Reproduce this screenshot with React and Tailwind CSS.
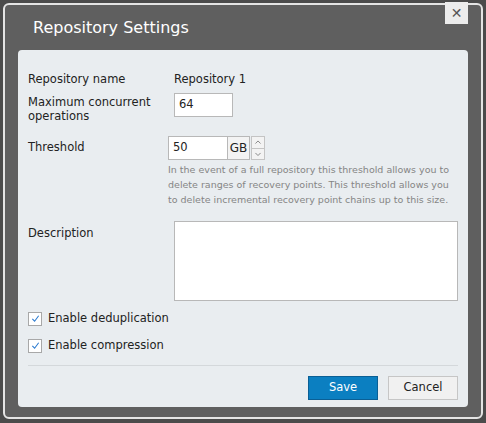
export default function App() {
  const Check = () => (
    <span className="w-[14px] h-[14px] border border-[#a8a8a8] bg-white flex items-center justify-center">
      <svg width="9" height="9" viewBox="0 0 10 10"><path d="M1.5 5.5 L4 8 L8.5 2" fill="none" stroke="#2b7bd0" strokeWidth="1.2" /></svg>
    </span>
  );
  return (
    <div className="w-[486px] h-[423px] bg-[#4b4b4b] pt-[3px] px-[3px] pb-[4px]" style={{ fontFamily: '"DejaVu Sans", Tahoma, sans-serif' }}>
      <div className="relative h-full rounded-[6px] border-[2px] border-[#e4e4e4] bg-[#5f5f5f] px-[13px] pb-[10px] flex flex-col">
        <button className="absolute top-[-3px] right-[13px] w-[23px] h-[22px] bg-[#ececec] text-[#555] text-[14px] leading-none flex items-center justify-center">✕</button>
        <div className="h-[45px] flex items-center pl-[15px] text-white text-[16px]">Repository Settings</div>
        <div className="flex-1 bg-[#e9edf0] rounded-[4px] pt-[20px] px-[10px] text-[11.5px] text-[#222]">
          <div className="flex h-[20px] items-center">
            <div className="w-[146px]">Repository name</div>
            <div>Repository 1</div>
          </div>
          <div className="flex mt-[3px]">
            <div className="w-[146px] leading-[14px] pt-[2px]">Maximum concurrent<br />operations</div>
            <div className="w-[59px] h-[24px] bg-white border border-[#b8b8b8] px-[4px] flex items-center">64</div>
          </div>
          <div className="flex mt-[13px]">
            <div className="w-[146px] pt-[3px]">Threshold</div>
            <div>
              <div className="flex h-[24px]">
                <div className="w-[60px] bg-white border border-[#b8b8b8] px-[4px] flex items-center">50</div>
                <div className="w-[22px] bg-[#f3f3f3] border border-l-0 border-[#b8b8b8] flex items-center justify-center text-[12px]">GB</div>
                <div className="w-[14px] ml-[1px] flex flex-col border border-[#c4c4c4] bg-[#f3f3f3] text-[#666]">
                  <svg className="flex-1" viewBox="0 0 14 11"><path d="M4 7 L7 4 L10 7" fill="none" stroke="#777" /></svg>
                  <svg className="flex-1 border-t border-[#c4c4c4]" viewBox="0 0 14 11"><path d="M4 4 L7 7 L10 4" fill="none" stroke="#777" /></svg>
                </div>
              </div>
              <div className="text-[9.5px] text-[#858585] leading-[15px] mt-[2px] w-[290px]">In the event of a full repository this threshold allows you to delete ranges of recovery points. This threshold allows you to delete incremental recovery point chains up to this size.</div>
            </div>
          </div>
          <div className="flex mt-[14px]">
            <div className="w-[146px] pt-[4px]">Description</div>
            <div className="w-[284px] h-[80px] bg-white border border-[#b8b8b8]" />
          </div>
          <div className="flex items-center gap-[6px] mt-[9px]"><Check />Enable deduplication</div>
          <div className="flex items-center gap-[6px] mt-[10px]"><Check />Enable compression</div>
          <div className="border-t border-[#d4d8db] mt-[10px]" />
          <div className="flex justify-end gap-[10px] mt-[10px]">
            <button className="w-[70px] h-[24px] bg-[#0b7fc1] border border-[#0a5f95] text-white">Save</button>
            <button className="w-[70px] h-[24px] bg-[#f1f1f1] border border-[#c6c6c6] text-[#222]">Cancel</button>
          </div>
        </div>
      </div>
    </div>
  );
}
